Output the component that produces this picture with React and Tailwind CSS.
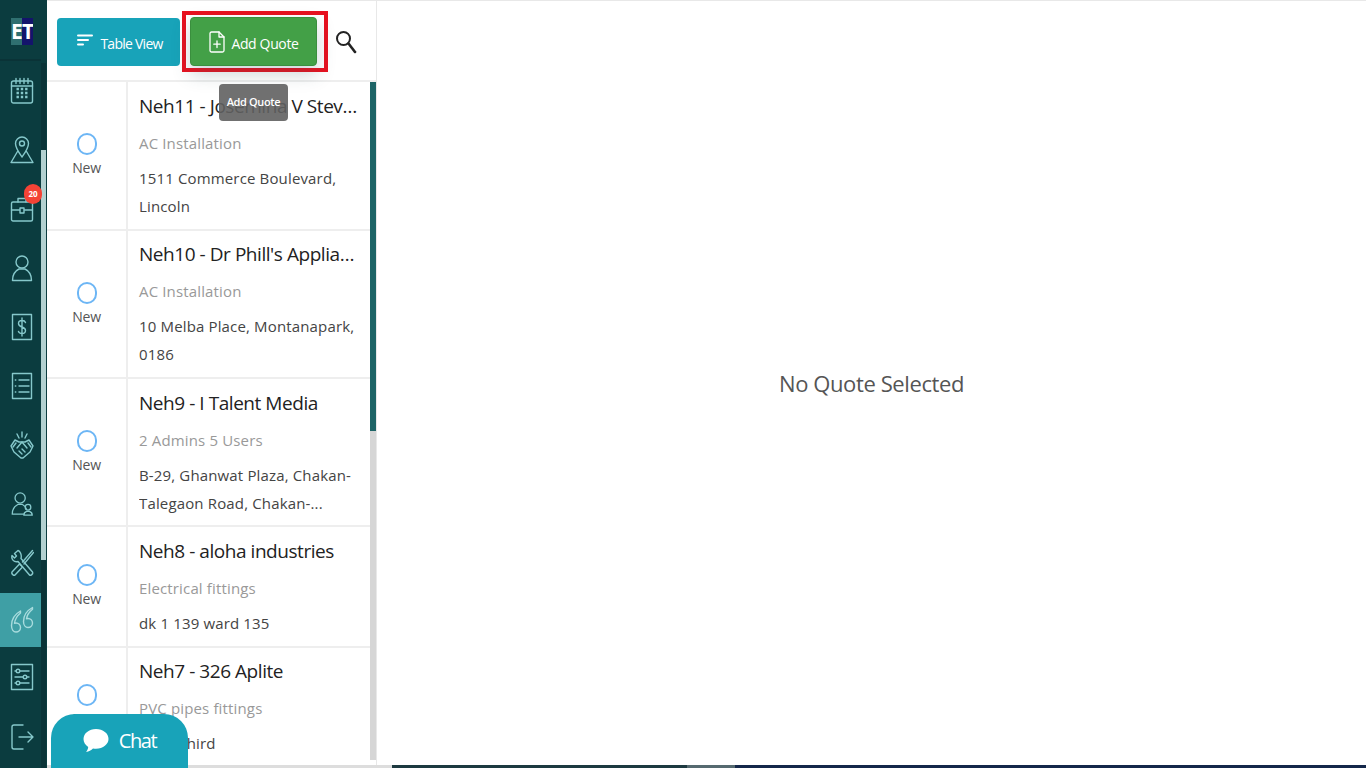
const Icon = ({ children, className = "w-6 h-7" }) => (
  <svg viewBox="0 0 24 28" fill="none" stroke="currentColor" strokeWidth="1.4" strokeLinecap="round" strokeLinejoin="round" className={className}>
    {children}
  </svg>
)

const navItems = [
  {
    name: "calendar",
    icon: (
      <Icon>
        <rect x="1.5" y="4" width="21" height="22" rx="2" />
        <path d="M1.5 9h21M6 1.5v5M10 1.5v5M14 1.5v5M18 1.5v5" />
        <path strokeWidth="2.4" strokeLinecap="butt" d="M6.5 12h2.4M10.8 12h2.4M15.1 12h2.4M6.5 16h2.4M10.8 16h2.4M15.1 16h2.4M6.5 20h2.4M10.8 20h2.4M15.1 20h2.4" />
      </Icon>
    ),
  },
  {
    name: "map",
    icon: (
      <Icon>
        <path d="M12 21C8.500 16 5.500 12 5.500 7.500a6.500 6.500 0 0 1 13 0C18.500 12 15.500 16 12 21z" />
        <circle cx="12" cy="7.500" r="2.500" />
        <path d="M7.500 15.500 1 26.500h22l-6.500-11" />
      </Icon>
    ),
  },
  {
    name: "jobs",
    icon: (
      <Icon>
        <rect x="1.500" y="7" width="21" height="19" rx="1.500" />
        <path d="M8 7V3.500h8V7M1.500 15h8M14.500 15h8" />
        <rect x="10" y="13" width="4" height="5" />
      </Icon>
    ),
  },
  {
    name: "person",
    icon: (
      <Icon>
        <circle cx="12" cy="8" r="6" />
        <path d="M2.500 26.500c0-6.500 3.500-10 6.500-11.500h6c3 1.500 6.500 5 6.500 11.500z" />
      </Icon>
    ),
  },
  {
    name: "invoice",
    icon: (
      <Icon>
        <rect x="2.500" y="1.500" width="19" height="25" />
        <path d="M15.500 9.500c-.5-1.500-2-2-3.500-2-2 0-3.500 1-3.500 3s1.500 2.800 3.500 3.500 3.500 1.500 3.500 3.500-1.500 3-3.500 3c-1.500 0-3-.5-3.500-2M12 5v18" />
      </Icon>
    ),
  },
  {
    name: "list",
    icon: (
      <Icon>
        <rect x="2.500" y="1.500" width="19" height="25" />
        <path d="M9 8h10M9 14h10M9 20h10M5.300 8h.5M5.300 14h.5M5.300 20h.5" />
      </Icon>
    ),
  },
  {
    name: "deals",
    icon: (
      <Icon>
        <path d="M12 1v5M7 3l2 4M17 3l-2 4" />
        <path d="M5 9 1 15l3 6 7 6h2l7-6 3-6-4-6-4 2h-6z" />
        <path d="M7 17l5-6 5 6M9 20l3 3M12 18l3 3M6 12l-3 4M18 12l3 4" />
      </Icon>
    ),
  },
  {
    name: "team",
    icon: (
      <Icon className="w-6 h-[26px]">
        <circle cx="10" cy="7.500" r="5.500" />
        <path d="M1.500 25c0-5.500 3-9 6-10.500h5c2 1 3.500 2.500 4 4.500M1.500 25h12" />
        <circle cx="18.500" cy="17.500" r="3" />
        <path d="M14 26c0-2 1.500-3.500 3-4h3c1.500.5 3 2 3 4z" />
      </Icon>
    ),
  },
  {
    name: "tools",
    icon: (
      <Icon>
        <path d="M8 1.500 4.500 4.500 6.500 7 4.500 9 2 6.500C1 10.500 4 13.500 8 12.500L19.500 26c1 1 4-1 3-3L11 9.500c1-4-1-7.500-3-8z" />
        <path d="M22.500 1.500 12.500 13M23.500 3.500 14 15M9.500 15l3 3-7.500 8c-1 1-4-1-3-3z" />
      </Icon>
    ),
  },
]

const rows = [
  { title: "Neh11 - Josemina V Stevens", sub: "AC Installation", addr: "1511 Commerce Boulevard, Lincoln", pad: "pt-[9px] pb-[9px]" },
  { title: "Neh10 - Dr Phill's Appliances", sub: "AC Installation", addr: "10 Melba Place, Montanapark, 0186", pad: "pt-[8px] pb-[9px]" },
  { title: "Neh9 - I Talent Media", sub: "2 Admins 5 Users", addr: "B-29, Ghanwat Plaza, Chakan-Talegaon Road, Chakan-...", pad: "pt-[9px] pb-[8px]" },
  { title: "Neh8 - aloha industries", sub: "Electrical fittings", addr: "dk 1 139 ward 135", pad: "pt-[9px] pb-[9px]" },
  { title: "Neh7 - 326 Aplite", sub: "PVC pipes fittings", addr: "Ward third", pad: "pt-[8px] pb-[8px]" },
]

const QuoteRow = ({ title, sub, addr, pad }) => (
  <div className="flex border-b-2 border-[#eeeeee] shrink-0">
    <div className="w-[81px] shrink-0 flex flex-col items-center justify-center pt-[2px] border-r-2 border-[#eeeeee]">
      <div className="w-[20px] h-[22px] rounded-full border-2 border-[#6db6f5]" />
      <div className="mt-[1px] text-[14px] leading-[24px] text-[#555555] tracking-[-0.2px]">New</div>
    </div>
    <div className={`flex-1 min-w-0 pl-[11px] pr-[12px] ${pad}`}>
      <div className="text-[19px] leading-[30px] text-[#222222] truncate tracking-[-0.45px] mb-[8px]">{title}</div>
      <div className="text-[15px] leading-[28px] text-[#999999] tracking-[0.15px] mb-[7px]">{sub}</div>
      <div className="text-[15px] leading-[28px] text-[#444444] tracking-[0.15px] line-clamp-2">{addr}</div>
    </div>
  </div>
)

export default function App() {
  return (
    <div className="relative flex w-[1366px] h-[768px] overflow-hidden bg-white font-['Open_Sans',sans-serif]">
      <aside className="flex w-[47px] shrink-0 bg-[#0b3c3f]">
        <div className="w-[41px] shrink-0 text-[#86c8cb]">
          <div className="h-[59px] flex items-center justify-center pl-[3px]">
            <div className="flex w-[22px] h-[27px] mt-[4px] text-[21px] leading-[27px] font-bold text-white overflow-hidden">
              <span className="w-[11px] bg-[#2f6f70] text-center">E</span>
              <span className="w-[11px] bg-[#14146b] text-center">T</span>
            </div>
          </div>
          <div className="border-t-2 border-[#0a3337]">
            {navItems.map((item) => (
              <div key={item.name} className="relative h-[59px] flex items-center justify-center pl-[2px]">
                {item.icon}
                {item.name === "jobs" && (
                  <span className="absolute left-[24px] top-[5px] w-[18px] h-[20px] rounded-full bg-[#f44336] text-white text-[8px] leading-[20px] font-bold text-center">
                    20
                  </span>
                )}
              </div>
            ))}
          </div>
          <div className="h-[54px] mt-[1px] bg-[#3f9fa5] text-[#a9dcde] flex items-center justify-center pl-[2px]">
            <Icon>
              <path d="M10.500 5C6 7.500 1.500 12.500 1.500 19.500c0 4 2 6.500 4.500 6.500s4.500-2 4.500-4.500S8.500 17 6 17c-.5 0-1 .1-1.500.3C5 13 7.500 9.500 10.500 7z" />
              <path d="M22.500 1.500C18 4 13.500 9 13.500 15.500c0 3.500 2 6 4.500 6s4.500-2 4.500-4.500-2-4.500-4.500-4.500c-.5 0-1 .1-1.500.3.5-4 3-7 6-9.500z" />
            </Icon>
          </div>
          <div className="h-[60px] flex items-center justify-center pl-[2px]">
            <Icon>
              <rect x="1.500" y="1.500" width="21" height="25" />
              <path d="M5 8h14M5 14h14M5 20h14" />
              <circle cx="8" cy="8" r="1.800" fill="#0b3c3f" />
              <circle cx="15" cy="14" r="1.800" fill="#0b3c3f" />
              <circle cx="8" cy="20" r="1.800" fill="#0b3c3f" />
            </Icon>
          </div>
          <div className="h-[59px] flex items-center justify-center pl-[2px]">
            <Icon>
              <path d="M13 2H4a2 2 0 0 0-2 2v20a2 2 0 0 0 2 2h9" />
              <path d="M9 14h14M18 9l5 5-5 5" />
            </Icon>
          </div>
        </div>
        <div className="w-[6px] shrink-0 pt-[63px]">
          <div className="h-[705px] w-[5px] bg-[#0a3337]">
            <div className="h-[87px]" />
            <div className="h-[410px] bg-[#b2d0d0]" />
          </div>
        </div>
      </aside>

      <div className="flex-1 flex flex-col min-w-0">
        <div className="flex h-[765px] border-t border-[#e8e8e8]">
          <section className="w-[330px] shrink-0 flex flex-col border-r border-[#e8e8e8]">
            <header className="relative flex items-center h-[81px] shrink-0 pl-[10px] border-b-2 border-[#eeeeee]">
              <button className="flex items-center justify-center gap-[7px] w-[123px] h-[48px] pl-[3px] rounded-[4px] bg-[#18a3b9] text-white text-[14px] mt-[2px]">
                <svg viewBox="0 0 16 12" className="w-4 h-3 mb-[3px]" fill="none" stroke="currentColor" strokeWidth="2" strokeLinecap="round">
                  <path d="M1 1.500h14M1 6h10M1 10.500h5" />
                </svg>
                <span className="tracking-[-0.75px] pt-[3px]">Table View</span>
              </button>
              <div className="ml-[2px] mt-[2px] border-[4px] border-[#e8111f] w-[146px] h-[61px] pl-[4px] pt-[2px] pb-[2px] pr-[7px]">
                <button className="flex items-center justify-center gap-[6px] w-full h-[49px] pl-[1px] rounded-[4px] border border-[#3a8f3e] bg-[#43a047] text-white text-[14px] shadow-[0_8px_18px_rgba(60,90,100,0.25)]">
                  <svg viewBox="0 0 16 22" className="w-[16px] h-[22px]" fill="none" stroke="currentColor" strokeWidth="1.300" strokeLinecap="round" strokeLinejoin="round">
                    <path d="M2.500 1h7.500l5 5v13.500a1.500 1.500 0 0 1-1.500 1.500h-11A1.500 1.500 0 0 1 1 19.500v-17A1.500 1.500 0 0 1 2.500 1z" />
                    <path d="M10 1v5h5M8 10v6.500M4.800 13.200h6.400" />
                  </svg>
                  <span className="tracking-[-0.35px] pt-[3px]">Add Quote</span>
                </button>
              </div>
              <svg viewBox="0 0 22 24" className="ml-[7px] mt-[2px] w-[22px] h-[24px] text-[#222222]" fill="none" stroke="currentColor" strokeLinecap="round">
                <circle cx="8.500" cy="8.500" r="6.500" strokeWidth="2" />
                <path d="M13.500 13.500 20 22" strokeWidth="2.600" />
              </svg>
              <div className="absolute z-10 left-[172px] top-[83px] w-[69px] h-[37px] rounded-[4px] bg-[#616161]/90 text-white text-[11px] font-semibold tracking-[-0.35px] flex items-center justify-center">
                Add Quote
              </div>
            </header>
            <div className="flex flex-1 min-h-0 overflow-hidden">
              <div className="w-[323px] shrink-0 flex flex-col">
                {rows.map((row) => (
                  <QuoteRow key={row.title} {...row} />
                ))}
              </div>
              <div className="w-[6px] shrink-0 h-[678px] bg-[#d6d6d6]">
                <div className="h-[349px] bg-[#1d6466]" />
              </div>
            </div>
          </section>
          <main className="flex-1 flex items-center justify-center">
            <p className="text-[22px] leading-[32px] text-[#555555] tracking-[-0.4px]">No Quote Selected</p>
          </main>
        </div>
        <div className="flex h-[3px]">
          <div className="w-[345px] bg-[#dddddd]" />
          <div className="w-[295px] bg-[#1d3a40]" />
          <div className="w-[48px] bg-[#566a70]" />
          <div className="flex-1 bg-[#14284a]" />
        </div>
      </div>

      <button className="absolute left-[51px] bottom-0 w-[137px] h-[54px] rounded-t-[24px] bg-[#18a3b9] text-white text-[20px] flex items-center justify-center gap-[10px] tracking-[-1.4px]">
        <svg viewBox="0 0 26 26" className="w-[26px] h-[26px]" fill="currentColor">
          <path d="M13 1C6 1 .5 5.400.5 11c0 3.200 1.800 6 4.700 7.900-.2 2-1 3.700-2.200 5.100 2.800-.4 5.300-1.800 7-3.600 1 .2 2 .3 3 .3 7 0 12.500-4.600 12.500-9.700C25.500 5.400 20 1 13 1z" />
        </svg>
        Chat
      </button>
    </div>
  )
}
